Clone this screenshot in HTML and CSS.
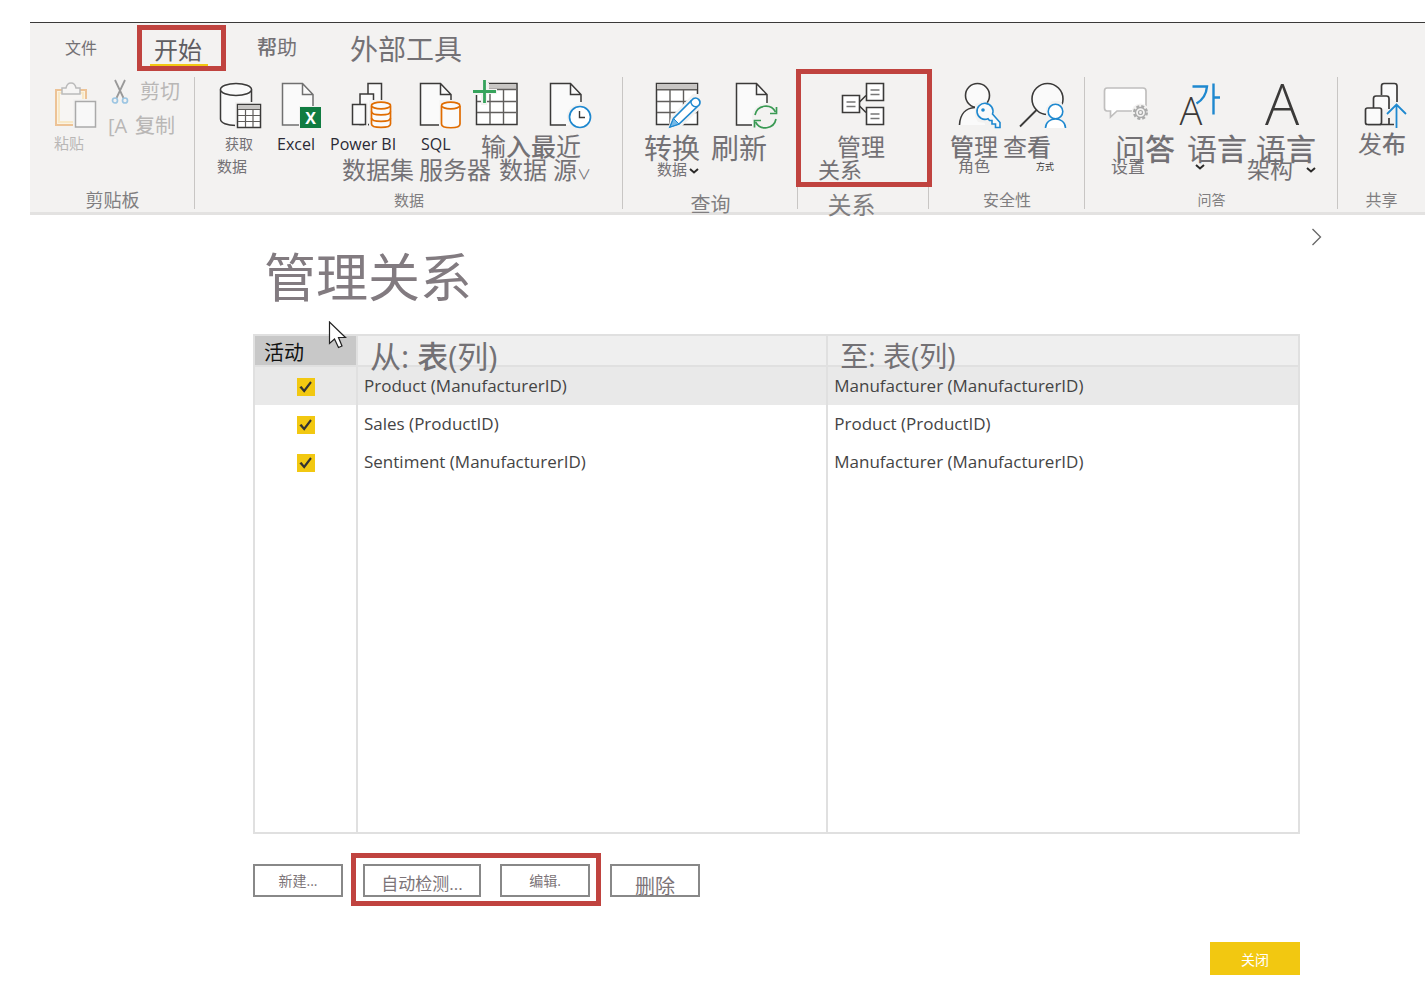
FILE: index.html
```html
<!DOCTYPE html>
<html lang="zh-CN">
<head>
<meta charset="utf-8">
<title>管理关系</title>
<link rel="stylesheet" href="styles.css">
</head>
<body>
<header class="ribbon">
  <nav class="tabs">
    <button class="tab t16">文件</button>
    <button class="tab tab-active t24"><span>开始</span></button>
    <button class="tab t20"><b>帮</b>助</button>
    <button class="tab tab-wide t28">外部工具</button>
  </nav>
  <div class="groups">
    <section class="group clipboard">
      <div class="tools">
        <button class="tool w54 disabled">
          <svg class="icon" viewBox="0 0 48 52"><path d="M2 10H32V45H2Z" fill="#fbf3e2" stroke="#edc396" stroke-width="2"/><path d="M5 13H29V42H5Z" fill="#f7f5f3" stroke="#f8e8c6" stroke-width="2"/><path d="M8 14V8H12Q13 3 17 3T22 8H26V14Z" fill="#f6f5f4" stroke="#bbb" stroke-width="1.5"/><path d="M19 19H44V50H19Z" fill="#f3f2f1"/><path d="M21.500 21.500H41.500V47H21.500Z" fill="#f8f8f8" stroke="#aaa" stroke-width="1.500"/></svg>
          <span class="t15 up">粘贴</span>
        </button>
        <div class="stack disabled">
          <button class="row t20"><svg class="scissors" viewBox="0 0 20 28"><path d="M5 2 13.500 20M15 2 6.500 20" stroke="#999" stroke-width="1.800" fill="none"/><circle cx="5" cy="22.500" r="2.500" fill="none" stroke="#9cc5e2" stroke-width="1.700"/><circle cx="15" cy="22.500" r="2.500" fill="none" stroke="#9cc5e2" stroke-width="1.700"/></svg><span>剪切</span></button>
          <button class="row t20"><span class="glyph">[A</span><span><b>复</b>制</span></button>
        </div>
      </div>
      <h2 class="t18">剪贴板</h2>
    </section>

    <section class="group data">
      <div class="tools">
        <button class="tool w60">
          <svg class="icon indent2" viewBox="0 0 48 52"><path d="M1.500 9.500V39C1.500 43 8 45 16 45V45H32.500V9.500" fill="#fafafa"/><path d="M1.500 9.500V39C1.500 43 8 45.500 17 45.500M32.500 9.500V22" fill="none" stroke="#3b3a39" stroke-width="1.500"/><ellipse cx="17" cy="9.500" rx="15.500" ry="6" fill="#fafafa" stroke="#3b3a39" stroke-width="1.500"/><path d="M16 22H44V50H16Z" fill="#f3f2f1"/><path d="M18.500 24.500H41.500V47.500H18.500Z" fill="#fff" stroke="#3b3a39" stroke-width="1.500"/><path d="M19 25H41V29H19Z" fill="#c8c6c4"/><path d="M19 29.500H41M19 35.500H41M19 41.500H41M26.500 30V47M34 30V47" stroke="#605e5c" stroke-width="1.200"/></svg>
          <span class="t14 indent8 up">获取</span><span class="t15 up">数据</span>
        </button>
        <button class="tool w53 latin">
          <svg class="icon indent4" viewBox="0 0 48 52"><path d="M1.500 3.500H21.500L32 14.500V45H1.500Z" fill="#fafafa"/><path d="M32 26V14.500L21.500 3.500H1.500V45H18M21.500 3.500V14.500H32" fill="none" stroke="#707070" stroke-width="1.500"/><path d="M18 26H41V49H18Z" fill="#f3f2f1"/><path d="M19 27H40V48H19Z" fill="#107c41"/><text x="29.500" y="44" text-anchor="middle" class="x-mark">X</text></svg>
          <span class="t16">Excel</span>
        </button>
        <button class="tool w84 latin">
          <svg class="icon indent21" viewBox="0 0 48 52"><g fill="#fafafa" stroke="#3b3a39" stroke-width="1.500"><path d="M17 3.500H30.500V44.500H17Z"/><path d="M9 14H22.500V44.500H9Z"/></g><path d="M13 22.500H17V47H13Z" fill="#f3f2f1"/><path d="M1.500 24.500H14.500V44.500H1.500Z" fill="#fafafa" stroke="#3b3a39" stroke-width="1.500"/><path d="M18 20H43V50H18Z" fill="#f3f2f1"/><path d="M20.500 26V44C20.500 48.500 39.500 48.500 39.500 44V26" fill="#fafafa" stroke="#e06c00" stroke-width="1.700"/><ellipse cx="30" cy="25.500" rx="9.500" ry="3.300" fill="#fafafa" stroke="#e06c00" stroke-width="1.700"/><path d="M20.500 31.500C20.500 36 39.500 36 39.500 31.500M20.500 38C20.500 42.500 39.500 42.500 39.500 38" fill="none" stroke="#e06c00" stroke-width="1.700"/></svg>
          <span class="t16">Power BI</span><span class="t24 far">数据集</span>
        </button>
        <button class="tool w53 latin">
          <svg class="icon" viewBox="0 0 48 52"><path d="M1.500 3.500H21.500L32 14.500V45H1.500Z" fill="#fafafa"/><path d="M32 20V14.500L21.500 3.500H1.500V45H20M21.500 3.500V14.500H32" fill="none" stroke="#3b3a39" stroke-width="1.500"/><path d="M20.500 20H44V50H20.500Z" fill="#f3f2f1"/><path d="M22.500 26V44C22.500 49 41 49 41 44V26" fill="#fafafa" stroke="#e06c00" stroke-width="1.700"/><ellipse cx="31.700" cy="25.500" rx="9.200" ry="3.300" fill="#fafafa" stroke="#e06c00" stroke-width="1.700"/></svg>
          <span class="t16 indent2">SQL</span><span class="t24">服务器</span>
        </button>
        <button class="tool w59">
          <svg class="icon" viewBox="0 0 48 52"><path d="M4.500 3.500H45V44.500H4.500Z" fill="#fff" stroke="#3b3a39" stroke-width="1.500"/><path d="M17 4H44V9H17Z" fill="#c8c6c4"/><path d="M5 9.500H44M5 21.500H44M5 32.500H44M18 10V44M31.500 10V44" stroke="#605e5c" stroke-width="1.400"/><path d="M0 0H16V3H17V9H25V14H15V25H9V15H0Z" fill="#f3f2f1"/><path d="M12.500 0V23M1 11.500H24" stroke="#36a35c" stroke-width="2.800"/></svg>
          <span class="t25 far">输<b>入</b></span><span class="t24 indent27">数据</span>
        </button>
        <button class="tool w60">
          <svg class="icon indent18" viewBox="0 0 48 52"><path d="M1.500 3.500H21.500L32 14.500V45H1.500Z" fill="#fafafa"/><path d="M32 22V14.500L21.500 3.500H1.500V45H17M21.500 3.500V14.500H32" fill="none" stroke="#3b3a39" stroke-width="1.500"/><circle cx="31" cy="37" r="13" fill="#f3f2f1"/><circle cx="31" cy="37" r="10.500" fill="#fff" stroke="#1e88cf" stroke-width="1.700"/><path d="M30.500 31V37.500H36" fill="none" stroke="#3b3a39" stroke-width="1.400"/></svg>
          <span class="t25"><b>最</b>近</span><span class="t24 far">源<small>∨</small></span>
        </button>
      </div>
      <h2 class="t15">数据</h2>
    </section>

    <section class="group query">
      <div class="tools">
        <button class="tool w67">
          <svg class="icon indent11" viewBox="0 0 48 52"><path d="M1.500 3.500H42.500V44.500H1.500Z" fill="#fff" stroke="#3b3a39" stroke-width="1.500"/><path d="M2 4H42V9H2Z" fill="#c8c6c4"/><path d="M2 9.700H42M2 21.500H42M2 32.500H42M15 10V44M28.500 10V44" stroke="#605e5c" stroke-width="1.400"/><path d="M13 50 16 37 38 14H50V24L25 48Z" fill="#f3f2f1"/><path d="M15 47 18.500 38.500 38.500 18.500A4.500 4.500 0 0 1 44.500 24.500L24 44Z" fill="#fff" stroke="#1e88cf" stroke-width="1.600"/><path d="M15 47 18.500 38.500 24 44Z" fill="#75b9e7" stroke="#1e88cf"/><path d="M36 20.500A5 5 0 0 0 42 26.500" fill="none" stroke="#1e88cf" stroke-width="1.500"/></svg>
          <span class="t28 down">转换</span><span class="t15 indent13">数据<svg class="chev" viewBox="0 0 10 6"><path d="M1 1 5 4.500 9 1"/></svg></span>
        </button>
        <button class="tool w68">
          <svg class="icon far" viewBox="0 0 48 52"><path d="M5.500 3.500H25.500L36 14.500V45H5.500Z" fill="#fafafa"/><path d="M36 23V14.500L25.500 3.500H5.500V45H21M25.500 3.500V14.500H36" fill="none" stroke="#3b3a39" stroke-width="1.500"/><circle cx="34.500" cy="37" r="13.500" fill="#f3f2f1"/><path d="M24 35A11 11 0 0 1 44.500 32M45 39A11 11 0 0 1 24.500 42" fill="none" stroke="#3a9a54" stroke-width="1.700"/><path d="M45.500 27V33.500H39M23.500 47.500V40.500H30" fill="none" stroke="#3a9a54" stroke-width="1.700"/></svg>
          <span class="t28 down">刷新</span>
        </button>
      </div>
      <h2 class="t20 low">查询</h2>
    </section>

    <section class="group relation">
      <div class="tools">
        <button class="tool w67">
          <svg class="icon indent22" viewBox="0 0 48 52"><path d="M18.500 23 26 15.500M18.500 25 26 32.500" stroke="#3b3a39" stroke-width="1.600"/><g fill="#fff" stroke="#3b3a39" stroke-width="1.600"><path d="M2.500 15.500H19.500V32.500H2.500Z"/><path d="M26.500 3.500H43.500V20.500H26.500Z"/><path d="M26.500 27.500H43.500V44.500H26.500Z"/></g><path d="M6.500 22H15.500M6.500 26.500H15.500M30.500 10H39.500M30.500 14.500H39.500M30.500 34H39.500M30.500 38.500H39.500" stroke="#777" stroke-width="1.400"/></svg>
          <span class="t24 far">管理</span><span class="t22">关系</span>
        </button>
      </div>
      <h2 class="t24 low">关系</h2>
      <div class="callout"></div>
    </section>

    <section class="group security">
      <div class="tools">
        <button class="tool w53">
          <svg class="icon indent8" viewBox="0 0 48 52"><path d="M1.500 45C1 36 7 28 17 27.500Q25 28 27 45Z" fill="#fafafa"/><circle cx="19.500" cy="15.500" r="12" fill="#fafafa" stroke="#3b3a39" stroke-width="1.600"/><path d="M1.500 45C2 34 8 28 17 27.500" fill="none" stroke="#3b3a39" stroke-width="1.600"/><path d="M17 24 26 21 36 26 45 40V50H35L28 43 20 42 17 36Z" fill="#f3f2f1"/><path d="M34.500 34 42 42.500V47.500H37.500V44H34V40.500H31.500L30 38.700A8 8 0 1 1 34.500 34Z" fill="#fafafa" stroke="#1e88cf" stroke-width="1.600"/><circle cx="25" cy="30" r="1.800" fill="#1e88cf"/></svg>
          <span class="t24"><b>管</b>理</span><span class="t16 indent8 up">角色</span>
        </button>
        <button class="tool w64">
          <svg class="icon far" viewBox="0 0 48 52"><circle cx="28.500" cy="19" r="15.500" fill="#fafafa" stroke="#3b3a39" stroke-width="1.600"/><path d="M1 46.500 18 29.500" stroke="#3b3a39" stroke-width="1.800"/><path d="M27 28 33 21H41L47 29 48 50H25L27 40Z" fill="#f3f2f1"/><circle cx="36.500" cy="31.500" r="7.300" fill="#fff" stroke="#1e88cf" stroke-width="1.600"/><path d="M26.500 48C26.500 36 46.500 36 46.500 48" fill="#fff" stroke="#1e88cf" stroke-width="1.600"/></svg>
          <span class="t24">查<b>看</b></span><span class="t9 indent33 up">方式</span>
        </button>
      </div>
      <h2 class="t16">安全性</h2>
    </section>

    <section class="group qa">
      <div class="tools">
        <button class="tool w72">
          <svg class="icon" viewBox="0 0 48 52"><path d="M4 8H40Q43 8 43 11V28Q43 31 40 31H14L7.500 37V31H4Q1.500 31 1.500 28V11Q1.500 8 4 8Z" fill="#fff" stroke="#c0bfbe" stroke-width="1.700"/><circle cx="37.500" cy="32.500" r="9" fill="#f3f2f1"/><circle cx="37.500" cy="32.500" r="6" fill="#f3f2f1" stroke="#aaa" stroke-width="3" stroke-dasharray="2.800 1.912"/><circle cx="37.500" cy="32.500" r="5" fill="#f3f2f1" stroke="#aaa" stroke-width="1.300"/><circle cx="37.500" cy="32.500" r="2" fill="none" stroke="#aaa" stroke-width="1.200"/></svg>
          <span class="t30 far down">问<b>答</b></span><span class="t17 indent8 up">设置</span>
        </button>
        <button class="tool w72">
          <svg class="icon indent4" viewBox="0 0 48 52"><text x="12" y="45" text-anchor="middle" class="a-small">A</text><path d="M13.500 6.500H28Q27 18 17.500 23.500M34.500 3.500V34.500M35 17.500H41" fill="none" stroke="#1e88cf" stroke-width="2.400"/></svg>
          <span class="t30 far down">语<b>言</b></span><span class="indent18 up"><svg class="chev" viewBox="0 0 10 6"><path d="M1 1 5 4.500 9 1"/></svg></span>
        </button>
        <button class="tool w69">
          <svg class="icon mid" viewBox="0 0 48 52"><text x="24" y="45" text-anchor="middle" class="a-large">A</text></svg>
          <span class="t30 far down">语<b>言</b></span><span class="t23 split">架构<svg class="chev" viewBox="0 0 10 6"><path d="M1 1 5 4.500 9 1"/></svg></span>
        </button>
      </div>
      <h2 class="t14">问答</h2>
    </section>

    <section class="group share">
      <div class="tools">
        <button class="tool w54">
          <svg class="icon far" viewBox="0 0 48 52"><g fill="#fafafa" stroke="#3b3a39" stroke-width="1.700"><path d="M17.500 15V6Q17.500 3.500 20 3.500H30.500Q33 3.500 33 6V22"/><path d="M9.500 28V18.500Q9.500 16 12 16H22.500Q25 16 25 18.500V29M25 38V44.500M4 44.500H30"/><rect x="1.500" y="28" width="16" height="16.500" rx="2"/></g><path d="M32.500 48V25M23 34 32.500 24.500 42 34" fill="none" stroke="#1e88cf" stroke-width="1.800"/></svg>
          <span class="t24 up">发<b>布</b></span>
        </button>
      </div>
      <h2 class="t16">共享</h2>
    </section>
  </div>
</header>

<main class="dialog">
  <div class="collapse"><button aria-label="展开"><svg viewBox="0 0 12 18"><path d="M1.500 1 9.500 9 1.500 17"/></svg></button></div>
  <h1>管理关系</h1>
  <div class="table-wrap">
    <table>
      <colgroup><col class="col-active"><col class="col-from"><col></colgroup>
      <thead><tr>
        <th class="sorted"><div class="t20">活动</div></th>
        <th><div class="from-title">从: <b>表</b>(列)</div></th>
        <th><div class="to-title">至: 表(列)</div></th>
      </tr></thead>
      <tbody>
        <tr class="selected"><td><input type="checkbox" checked aria-label="Product (ManufacturerID)"></td><td>Product (ManufacturerID)</td><td>Manufacturer (ManufacturerID)</td></tr>
        <tr><td><input type="checkbox" checked aria-label="Sales (ProductID)"></td><td>Sales (ProductID)</td><td>Product (ProductID)</td></tr>
        <tr><td><input type="checkbox" checked aria-label="Sentiment (ManufacturerID)"></td><td>Sentiment (ManufacturerID)</td><td>Manufacturer (ManufacturerID)</td></tr>
        <tr class="filler"><td></td><td></td><td></td></tr>
      </tbody>
    </table>
    <svg class="cursor" viewBox="0 0 20 30"><path d="M1.500 1V22.500L6.500 18 10.500 26.500 14 25 10.500 16.500H17.500Z" fill="#fff" stroke="#222" stroke-width="1.200"/></svg>
  </div>
  <div class="actions">
    <button class="btn t14">新建...</button>
    <div class="marked">
      <button class="btn btn-wide t17">自动检测...</button>
      <button class="btn t14">编辑.</button>
    </div>
    <button class="btn btn-large t20">删除</button>
  </div>
  <div class="footer"><button class="close t14">关闭</button></div>
</main>
</body>
</html>
```

FILE: styles.css
```css
* { box-sizing: border-box; }
body { margin: 0; background: #fff; color: #737175; font-family: "Open Sans", "Noto Sans CJK SC", sans-serif; }
button { font-family: inherit; color: inherit; background: none; border: 0; padding: 0; margin: 0; }
h1, h2 { margin: 0; font-weight: 400; }
b { font-weight: 500; }

.t9 { font-size: 9px; }
.t14 { font-size: 14px; }
.t15 { font-size: 15px; }
.t16 { font-size: 16px; }
.t17 { font-size: 17px; }
.t18 { font-size: 18px; }
.t20 { font-size: 20px; }
.t22 { font-size: 22px; }
.t23 { font-size: 23px; }
.t24 { font-size: 24px; }
.t25 { font-size: 25px; }
.t28 { font-size: 28px; }
.t30 { font-size: 30px; }

/* Ribbon */
.ribbon { margin: 22px 0 0 30px; background: #f3f2f1; border-top: 1px solid #3b3a39; border-bottom: 3px solid #e3e2e1; }
.tabs { display: flex; align-items: flex-start; height: 54px; padding: 2px 0 0 35px; }
.tab { height: 46px; line-height: 40px; white-space: nowrap; }
.tab-active { width: 89px; margin: 0 31px 0 40px; border: 5px solid #c0433f; color: #5f5d61; text-align: left; }
.tab-active span { display: block; height: 36px; margin: 0 13px 0 8px; padding-left: 4px; border-bottom: 2px solid #f2c811; }
.tab-wide { margin-left: 53px; line-height: 48px; }
.groups { display: grid; grid-template-columns: 165fr 428fr 175fr 131fr 156fr 253fr 87fr; }
.group { position: relative; display: flex; flex-direction: column; justify-content: space-between; height: 135px; }
.group::after { content: ""; position: absolute; right: 0; top: 0; height: 132px; width: 1px; background: #c8c6c4; }
.share::after { display: none; }
.group h2 { height: 28px; line-height: 32px; text-align: center; white-space: nowrap; color: #807e80; }
.group .low { line-height: 42px; }
.tools { display: flex; align-items: flex-start; padding-top: 3px; }
.clipboard .tools { padding-left: 24px; }
.data .tools { padding-left: 22px; }
.query .tools { padding-left: 21px; }
.relation .tools { padding-left: 20px; }
.relation h2 { padding-right: 24px; position: relative; z-index: 1; }
.security .tools { padding-left: 21px; }
.qa .tools { padding-left: 18px; }
.share .tools { padding-left: 20px; }

.tool { display: flex; flex: none; flex-direction: column; align-items: flex-start; line-height: 23px; white-space: nowrap; text-align: left; }
.tool > span { height: 23px; }
.icon { width: 48px; height: 52px; margin-bottom: 3px; flex: none; overflow: visible; }
.mid { align-self: center; }
.far { align-self: flex-end; }
.tool > .down { line-height: 27px; }
.tool > .up { line-height: 17px; }
.split { display: flex; align-self: stretch; align-items: center; justify-content: space-between; }
.indent2 { margin-left: 2px; }
.indent4 { margin-left: 4px; }
.indent8 { margin-left: 8px; }
.indent11 { margin-left: 11px; }
.indent13 { margin-left: 13px; }
.indent18 { margin-left: 18px; }
.indent21 { margin-left: 21px; }
.indent22 { margin-left: 22px; }
.indent27 { margin-left: 27px; }
.indent33 { margin-left: 33px; }
.w53 { width: 53px; }
.w54 { width: 54px; }
.w59 { width: 59px; }
.w60 { width: 60px; }
.w64 { width: 64px; }
.w67 { width: 67px; }
.w68 { width: 68px; }
.w69 { width: 69px; }
.w72 { width: 72px; }
.w84 { width: 84px; margin-right: 5px; }
.latin .t16 { color: #2b2a35; line-height: 18px; }
.tool small { font-size: 14px; }
.t9 { color: #3b3a39; }
.chev { width: 10px; height: 6px; margin-left: 2px; vertical-align: middle; }
.chev path { fill: none; stroke: #2b2a29; stroke-width: 2; }
.x-mark { font: 700 16px "Open Sans", sans-serif; fill: #fff; }
.a-small { font: 300 38px "Open Sans", sans-serif; fill: #3b3a39; }
.a-large { font: 300 57px "Open Sans", sans-serif; fill: #3b3a39; }

.disabled { color: #b9b7b6; }
.stack { display: flex; flex-direction: column; }
.row { display: flex; align-items: center; gap: 8px; height: 34px; line-height: 24px; white-space: nowrap; }
.clipboard .stack { margin-top: -5px; }
.scissors { width: 24px; height: 28px; }
.glyph { width: 19px; }
.callout { position: absolute; inset: -8px -3px 25px -2px; border: 5px solid #c0433f; pointer-events: none; z-index: 2; }

/* Dialog */
.dialog { padding: 12px 125px 15px 253px; }
.collapse { display: flex; justify-content: flex-end; margin-right: -23px; height: 20px; }
.collapse svg { display: block; width: 12px; height: 18px; }
.collapse path { fill: none; stroke: #666; stroke-width: 1.3; }
h1 { padding-left: 11px; font-size: 52px; line-height: 60px; color: #827b80; }
.table-wrap { position: relative; margin-top: 27px; }
table { width: 100%; height: 500px; border-collapse: collapse; table-layout: fixed; font-size: 17px; color: #444; }
.col-active { width: 103px; }
.col-from { width: 45%; }
table, th, td { border: 0 solid #e0e0e0; }
table { border-width: 2px; }
th, td { border-left-width: 2px; padding: 0 6px; text-align: left; }
th { height: 31px; border-bottom-width: 2px; background: #efefef; font-weight: 400; }
th div { height: 29px; line-height: 34px; white-space: nowrap; }
th .from-title, th .to-title { color: #737175; line-height: 40px; padding-left: 6px; }
.from-title { font-size: 31px; }
.to-title { font-size: 28px; }
th.sorted { background: #c8c8c8; color: #111; padding-left: 9px; }
td { height: 38px; line-height: 38px; vertical-align: top; white-space: nowrap; }
td:first-child { text-align: center; }
.selected { background: #e9e9e9; }
.filler td { height: auto; }
input { appearance: none; display: inline-block; width: 18px; height: 18px; margin: 11px 0 0; background: #f2c811; vertical-align: top; }
input::before { content: ""; display: block; height: 18px; background: #333; clip-path: polygon(16% 52%, 28% 44%, 42% 62%, 76% 18%, 85% 26%, 43% 82%); }
.cursor { position: absolute; left: 75px; top: -13px; width: 20px; height: 30px; }

.actions { display: flex; align-items: flex-end; margin-top: 19px; }
.actions > .btn { margin-bottom: 9px; }
.btn { width: 90px; height: 33px; border: 2px solid #888; color: #7c7478; line-height: 29px; white-space: nowrap; }
.btn-wide { width: 118px; padding-top: 3px; }
.btn-large { padding-top: 6px; }
.marked { display: flex; gap: 19px; margin: 0 9px 0 8px; padding: 6px 6px 4px 7px; border: 5px solid #c0433f; }
.footer { display: flex; justify-content: flex-end; margin-top: 36px; }
.close { width: 90px; height: 33px; background: #f2c811; color: #fff; }
```
